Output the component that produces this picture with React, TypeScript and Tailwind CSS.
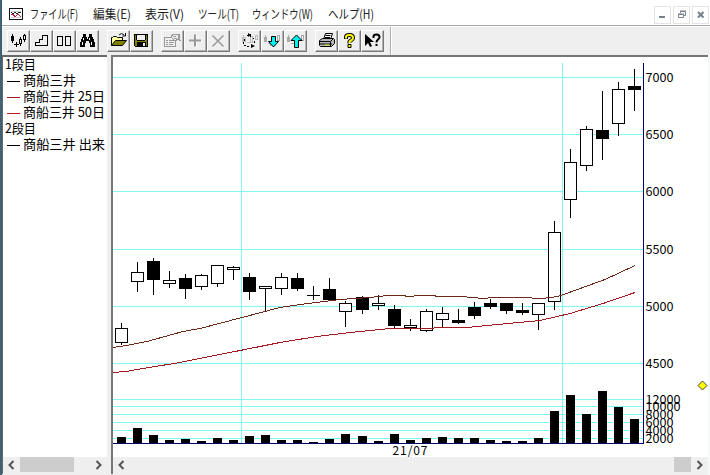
import type { ReactNode } from 'react';

type Candle = {
  x: number;
  high: number;
  top: number;
  bottom: number;
  low: number;
  filled: boolean;
  volume: number;
};

// x, high, body top, body bottom, low, filled, top of volume bar
const rows: [number, number, number, number, number, number, number][] = [
  [121, 323, 328, 342, 344, 0, 437],
  [137, 262, 272, 281, 291, 0, 428],
  [153, 258, 261, 279, 294, 1, 435],
  [169, 271, 280, 283, 287, 0, 440],
  [185, 274, 278, 288, 298, 1, 439],
  [201, 274, 275, 286, 289, 0, 441],
  [217, 265, 265, 283, 286, 0, 438],
  [233, 266, 267, 269, 279, 0, 440],
  [249, 273, 277, 291, 299, 1, 436],
  [265, 286, 286, 288, 310, 0, 435],
  [281, 273, 277, 288, 294, 0, 440],
  [297, 273, 278, 288, 290, 1, 440],
  [313, 286, 295, 295, 299, 1, 442],
  [329, 278, 289, 299, 299, 1, 439],
  [345, 301, 303, 311, 326, 0, 434],
  [362, 296, 297, 309, 313, 1, 436],
  [378, 295, 303, 305, 309, 0, 441],
  [394, 305, 309, 325, 328, 1, 434],
  [410, 319, 325, 327, 330, 0, 440],
  [426, 309, 311, 330, 331, 0, 438],
  [442, 307, 313, 319, 326, 0, 437],
  [458, 309, 320, 322, 323, 1, 438],
  [474, 302, 307, 315, 318, 1, 438],
  [490, 299, 303, 306, 308, 1, 440],
  [506, 303, 303, 310, 313, 1, 441],
  [522, 303, 310, 312, 314, 1, 441],
  [538, 303, 303, 314, 329, 0, 438],
  [554, 221, 232, 301, 309, 0, 411],
  [570, 149, 162, 199, 217, 0, 395],
  [586, 126, 129, 165, 170, 0, 414],
  [602, 91, 130, 138, 159, 1, 391],
  [618, 82, 89, 123, 135, 0, 407],
  [634, 69, 86, 89, 110, 1, 419],
];

const candles: Candle[] = rows.map(([x, high, top, bottom, low, filled, volume]) => ({
  x,
  high,
  top,
  bottom,
  low,
  filled: filled === 1,
  volume,
}));

const ma25 =
  '113,347 126,345 147,341 183,331 200,328 242,317 280,307 300,304 340,299 370,297 387,295 403,295 408,296 420,295 434,295 437,296 462,296 483,298 493,297 530,297 534,298 542,298 558,296 583,287 605,279 635,265';
const ma50 =
  '113,372 126,371 143,368 180,362 240,350 280,342 317,336 350,332 380,329 390,328 433,328 435,327 467,327 487,325 540,320 570,313 603,303 635,292';

const priceAxis = [
  { y: 77, label: '7000' },
  { y: 134, label: '6500' },
  { y: 191, label: '6000' },
  { y: 249, label: '5500' },
  { y: 306, label: '5000' },
  { y: 363, label: '4500' },
];

const volumeAxis = [
  { y: 399, label: '12000' },
  { y: 406, label: '10000' },
  { y: 414, label: '8000' },
  { y: 422, label: '6000' },
  { y: 430, label: '4000' },
  { y: 438, label: '2000' },
];

function Chart() {
  return (
    <svg width="595" height="400" viewBox="113 57 595 400" shapeRendering="crispEdges" className="block">
      {[...priceAxis, ...volumeAxis].map(({ y }) => (
        <rect key={y} x={113} y={y} width={530} height={1} fill="#80f8f8" />
      ))}
      {[241, 562].map((x) => (
        <rect key={x} x={x} y={63} width={1} height={380} fill="#80f8f8" />
      ))}
      {candles.map((c) => (
        <g key={c.x}>
          <rect x={c.x} y={c.high} width={1} height={c.low - c.high + 1} />
          {c.filled ? (
            <rect x={c.x - 6} y={c.top} width={13} height={c.bottom - c.top + 1} />
          ) : (
            <rect x={c.x - 5.5} y={c.top + 0.5} width={12} height={c.bottom - c.top} fill="#fff" stroke="#000" />
          )}
          <rect x={c.x - 4} y={c.volume} width={9} height={443 - c.volume} />
        </g>
      ))}
      <polyline points={ma25} fill="none" stroke="#6b2a18" transform="translate(0 .5)" />
      <polyline points={ma50} fill="none" stroke="#a81820" transform="translate(0 .5)" />
      <rect x={643} y={63} width={1} height={381} fill="#000070" />
      <rect x={113} y={443} width={531} height={1} fill="#000070" />
      <g fontFamily="'Noto Sans CJK JP', sans-serif" fontSize="12">
        {[...priceAxis, ...volumeAxis].map(({ y, label }) => (
          <text key={y} x={645.5} y={y + 5} textLength={label.length * 7} lengthAdjust="spacingAndGlyphs">
            {label}
          </text>
        ))}
        <text x={392.5} y={455} textLength={35}>
          21/07
        </text>
      </g>
      <path d="M702.5 381l4.5 4.500-4.500 4.500-4.500-4.500z" fill="#ff0" stroke="#444" shapeRendering="auto" />
    </svg>
  );
}

function ToolButton({ children }: { children: ReactNode }) {
  return (
    <button className="h-[22px] w-[23px] border border-t-white border-l-white border-r-[#777] border-b-[#777] bg-[#efefef] shadow-[inset_-1px_-1px_0_#b4b4b4]">
      <svg width="21" height="20" viewBox="1 1 21 20" fill="none" stroke="#000" className="block">
        {children}
      </svg>
    </button>
  );
}

function Toolbar() {
  return (
    <div className="flex h-[29px] items-center gap-2 border-t border-white bg-[#efefef] pl-[5px]">
      <div className="flex">
        <ToolButton>
          <g shapeRendering="crispEdges">
            <path d="M5.5 4v9M7 14.5h5M9.5 12v5M13.5 7v2M13.5 14v2M17.5 4v1M17.5 10v2" />
            <path d="M4 6h3v5H4z" fill="#000" stroke="none" />
            <path d="M12.5 9.5h2v4h-2zM16.5 5.5h2v4h-2z" />
          </g>
        </ToolButton>
        <ToolButton>
          <path d="M5.5 15.5h12v-10h-5v4h-3v3h-4z" shapeRendering="crispEdges" />
        </ToolButton>
        <ToolButton>
          <path d="M4.5 6.5h5v9h-5zM12.5 6.5h5v9h-5z" shapeRendering="crispEdges" />
        </ToolButton>
        <ToolButton>
          <path
            d="M7 4h3v3h1v2h1V7h1V4h3v3h1v2h1v3h1v5h-5v-4h-1v-2h-3v2H9v4H4v-5h1V9h1V7h1z"
            fill="#000"
            stroke="none"
            shapeRendering="crispEdges"
          />
          <path d="M7.5 8v2M6.5 12v3M13.5 8v2M15.5 12v3" stroke="#fff" shapeRendering="crispEdges" />
        </ToolButton>
      </div>
      <div className="flex">
        <ToolButton>
          <path d="M4.5 15.5v-8h1l1-1h3l1 1h5v3" fill="#ffffa0" />
          <path d="M4.5 15.5l4-5h11l-4 5z" fill="#808000" />
          <path d="M12 5q2.500-3 5 0M18.500 3v3h-3" />
        </ToolButton>
        <ToolButton>
          <g shapeRendering="crispEdges">
            <path d="M4.500 4.500h13v12h-12l-1-1z" fill="#808000" />
            <path d="M7 5h8v5H7z" fill="#efefef" stroke="none" />
            <path d="M7 12h9v5H7z" fill="#000" stroke="none" />
            <path d="M13 13h2v3h-2z" fill="#efefef" stroke="none" />
            <path d="M7 10.500h8M6.500 5v5M15.500 5v5" />
          </g>
        </ToolButton>
      </div>
      <div className="flex">
        <ToolButton>
          <g stroke="#999" shapeRendering="crispEdges">
            <path d="M3.500 7.500h11v9h-11zM5 10.500h2M8 10.500h5M5 12.500h2M8 12.500h5M5 14.500h2M8 14.500h4" />
            <path d="M10.500 5.500l2-1h5v5l-4 1-3-3z" fill="#efefef" />
            <path d="M12 6.500h3M13 8.500h3M18 4v6h2" />
          </g>
        </ToolButton>
        <ToolButton>
          <path d="M12 5v12M6 11h12" stroke="#fff" strokeWidth="2" />
          <path d="M11 4.500v12M5 10.500h12" stroke="#999" strokeWidth="2" />
        </ToolButton>
        <ToolButton>
          <path d="M6 6l11 11M17 6L6 17" stroke="#fff" strokeWidth="1.500" />
          <path d="M5.500 5.500l11 11M16.500 5.500l-11 11" stroke="#999" strokeWidth="1.600" />
        </ToolButton>
      </div>
      <div className="flex">
        <ToolButton>
          <g shapeRendering="crispEdges">
            <path d="M5.500 5v7M4 7h3v4H4zM9 12.500h4M12.500 6.500h2v6h-2zM17.500 5.500h2v4h-2z" stroke="#bbb" />
            <path d="M6 9h1v2H6zM5 12h1v2H5zM6 15h2v1H6zM9 16h2v1H9zM9 5h2v1H9zM12 4h1v3h-1zM15 8h1v1h-1zM16 11h1v2h-1z" fill="#000" stroke="none" />
          </g>
          <path d="M13 14v4l4-2zM10 3l3 2-3 2z" fill="#000" stroke="none" />
        </ToolButton>
        <ToolButton>
          <path d="M4.500 5v7M3.500 7h2v4h-2zM7 13.500h4M9.500 12v4M16.500 5.500h2v5h-2z" stroke="#aaa" shapeRendering="crispEdges" />
          <path d="M10.500 6.500h4v5h3l-5 5.500-5-5.500h3z" fill="#00f0f0" />
        </ToolButton>
        <ToolButton>
          <path d="M4.500 5v7M3.500 7h2v4h-2zM7 13.500h4M17.500 5.500h2v5h-2z" stroke="#aaa" shapeRendering="crispEdges" />
          <path d="M10.500 17.500h4v-7h3.500L12.500 5 7 10.500h3.500z" fill="#00f0f0" />
        </ToolButton>
      </div>
      <div className="flex">
        <ToolButton>
          <path d="M8.500 9.500l2-6h7l-2 6z" fill="#fff" />
          <path d="M10.500 5.500h5M10 7.500h5" />
          <path d="M4.500 10.500l3-2h11l1 1v4l-3 3h-11l-1-1z" fill="#b8b8b8" />
          <path d="M4.500 11.500h11l3-3M5 14h12M15.500 12v4" />
          <path d="M10 15h4" stroke="#e8e800" />
        </ToolButton>
        <ToolButton>
          <path d="M8 9V7q0-2 3.500-2T15 8q0 1.500-2 2.500t-1.500 2.500" stroke="#000" strokeWidth="4" />
          <path d="M8 8.500V7q0-2 3.500-2T15 8q0 1.500-2 2.500t-1.500 2.500" stroke="#ff0" strokeWidth="2" />
          <path d="M10 14.500h3v3h-3z" fill="#ff0" />
        </ToolButton>
        <ToolButton>
          <path d="M4 4v12l3-3 2 4 2-1-2-4h4z" fill="#000" stroke="none" />
          <path d="M12.500 8V6.500q0-2 3-2t3 2.500q0 1.500-1.500 2.500t-1.500 3M15.500 14v2" strokeWidth="2" />
        </ToolButton>
      </div>
      <div className="-ml-0.5 h-7 w-0.5 border-l border-[#b0b0b0] bg-white" />
    </div>
  );
}

const menus = [
  { label: 'ファイル(F)', width: 'w-[63px]', text: 48 },
  { label: '編集(E)', width: 'w-[52px]', text: 38 },
  { label: '表示(V)', width: 'w-[53px]', text: 39 },
  { label: 'ツール(T)', width: 'w-[54px]', text: 41 },
  { label: 'ウィンドウ(W)', width: 'w-[76px]', text: 61 },
  { label: 'ヘルプ(H)', width: 'w-[60px]', text: 46 },
];

function MenuBar() {
  return (
    <div className="flex h-[25px] bg-white">
      <svg width="14" height="12" viewBox="0 0 14 12" className="mt-2 ml-[7px]" fill="none" shapeRendering="crispEdges">
        <path d="M.5.500h13v11H.5z" stroke="#111" />
        <path d="M2 3.500h10M2 9.500h10" stroke="#ccc" />
        <path d="M2 4l2 2 2-2 2 2 2-2 2 1" stroke="#222" />
        <path d="M2 7l2-1 2 3 3-3 3 3" stroke="#c02040" />
      </svg>
      <div className="ml-[7px] flex">
        {menus.map((m) => (
          <div key={m.label} className={m.width}>
            <svg width={m.text + 2} height="25" className="block overflow-visible">
              <text
                x="0"
                y="19"
                textLength={m.text}
                lengthAdjust="spacingAndGlyphs"
                fontFamily="'Noto Sans CJK JP', sans-serif"
                fontSize="12.5"
                fill="#222"
              >
                {m.label}
              </text>
            </svg>
          </div>
        ))}
      </div>
      <div className="mt-1.5 mr-px ml-auto flex gap-0.5">
        <WindowButton>
          <path d="M5 11h6" strokeWidth="2" />
        </WindowButton>
        <WindowButton>
          <path d="M7.500 7V5.500h5v4H11M7 5h6" />
          <path d="M5.500 8.500h5v3h-5zM5 8h6" />
        </WindowButton>
        <WindowButton>
          <path d="M6 6l5.500 5.500M11.500 6L6 11.500" strokeWidth="2" />
        </WindowButton>
      </div>
    </div>
  );
}

function WindowButton({ children }: { children: ReactNode }) {
  return (
    <button className="h-[18px] w-[17px] border border-[#e4e4e4] bg-white">
      <svg width="15" height="16" viewBox="1 1 15 16" fill="none" stroke="#77808c" className="block">
        {children}
      </svg>
    </button>
  );
}

const legend = [
  { heading: '1段目', width: 31 },
  { label: '商船三井', color: '#000', width: 53 },
  { label: '商船三井 25日', color: '#981c1c', width: 82 },
  { label: '商船三井 50日', color: '#c01820', width: 82 },
  { heading: '2段目', width: 31 },
  { label: '商船三井 出来', color: '#000', width: 82 },
];

function Legend() {
  return (
    <div className="h-[400px]">
      {legend.map((item, i) => (
        <svg key={i} width="102" height="16" className="block overflow-visible">
          {item.color && <path d="M4 8.500h13" stroke={item.color} shapeRendering="crispEdges" />}
          <text
            x={item.heading ? 2 : 20}
            y="12"
            textLength={item.width}
            lengthAdjust="spacingAndGlyphs"
            fontFamily="'Noto Sans CJK JP', sans-serif"
            fontSize="13"
          >
            {item.heading ?? item.label}
          </text>
        </svg>
      ))}
    </div>
  );
}

function Arrow({ right = false }: { right?: boolean }) {
  return (
    <svg width="17" height="17" viewBox="0 0 17 17" fill="none" stroke="#555" strokeWidth="2">
      <path d={right ? 'M6.500 4l4 4-4 4' : 'M10.500 4l-4 4 4 4'} />
    </svg>
  );
}

function App() {
  return (
    <div className="h-[475px] w-[710px] overflow-hidden border-l-2 border-[#3e6173] bg-[#efefef]">
      <MenuBar />
      <div className="h-px bg-[#a8a8a8]" />
      <Toolbar />
      <div className="flex h-[420px]">
        <div className="h-[419px] w-[105px] border-t-2 border-l border-[#696969] bg-white">
          <Legend />
          <div className="flex h-[17px] bg-[#efefef]">
            <Arrow />
            <div className="h-[15px] w-[54px] bg-[#cdcdcd]" />
            <div className="ml-auto">
              <Arrow right />
            </div>
          </div>
        </div>
        <div className="ml-1 h-[419px] w-[597px] border-t-2 border-l-2 border-[#777] bg-white">
          <Chart />
          <div className="flex h-[17px] bg-[#efefef]">
            <Arrow />
            <div className="ml-auto h-[15px] w-[17px] bg-[#cdcdcd]" />
            <Arrow right />
          </div>
        </div>
        <div className="w-0.5 bg-[#f4fafa]" />
      </div>
    </div>
  );
}

export default App;
